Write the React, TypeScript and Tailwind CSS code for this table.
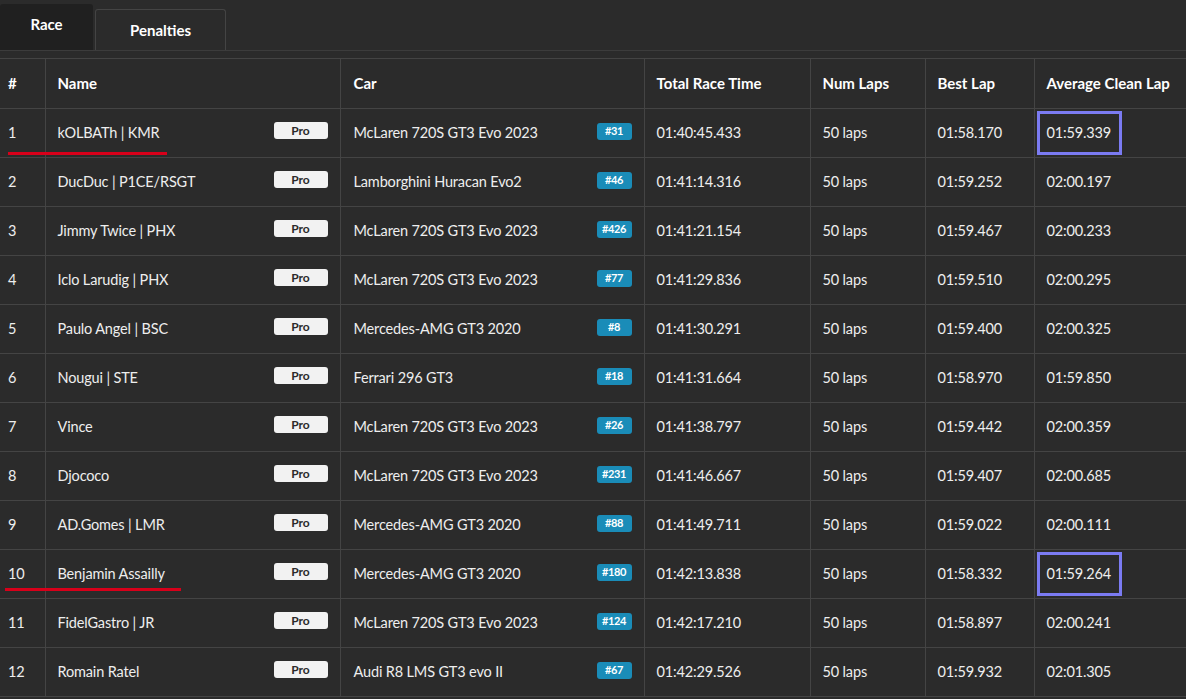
const rows = [
  { pos: 1, name: "kOLBATh | KMR", car: "McLaren 720S GT3 Evo 2023", num: "#31", total: "01:40:45.433", best: "01:58.170", avg: "01:59.339", mark: true, line: "w-[159px] left-[8px] bottom-[2px]" },
  { pos: 2, name: "DucDuc | P1CE/RSGT", car: "Lamborghini Huracan Evo2", num: "#46", total: "01:41:14.316", best: "01:59.252", avg: "02:00.197" },
  { pos: 3, name: "Jimmy Twice | PHX", car: "McLaren 720S GT3 Evo 2023", num: "#426", total: "01:41:21.154", best: "01:59.467", avg: "02:00.233" },
  { pos: 4, name: "Iclo Larudig | PHX", car: "McLaren 720S GT3 Evo 2023", num: "#77", total: "01:41:29.836", best: "01:59.510", avg: "02:00.295" },
  { pos: 5, name: "Paulo Angel | BSC", car: "Mercedes-AMG GT3 2020", num: "#8", total: "01:41:30.291", best: "01:59.400", avg: "02:00.325" },
  { pos: 6, name: "Nougui | STE", car: "Ferrari 296 GT3", num: "#18", total: "01:41:31.664", best: "01:58.970", avg: "01:59.850" },
  { pos: 7, name: "Vince", car: "McLaren 720S GT3 Evo 2023", num: "#26", total: "01:41:38.797", best: "01:59.442", avg: "02:00.359" },
  { pos: 8, name: "Djococo", car: "McLaren 720S GT3 Evo 2023", num: "#231", total: "01:41:46.667", best: "01:59.407", avg: "02:00.685" },
  { pos: 9, name: "AD.Gomes | LMR", car: "Mercedes-AMG GT3 2020", num: "#88", total: "01:41:49.711", best: "01:59.022", avg: "02:00.111" },
  { pos: 10, name: "Benjamin Assailly", car: "Mercedes-AMG GT3 2020", num: "#180", total: "01:42:13.838", best: "01:58.332", avg: "01:59.264", mark: true, line: "w-[176px] left-[5px] bottom-[7px]" },
  { pos: 11, name: "FidelGastro | JR", car: "McLaren 720S GT3 Evo 2023", num: "#124", total: "01:42:17.210", best: "01:58.897", avg: "02:00.241" },
  { pos: 12, name: "Romain Ratel", car: "Audi R8 LMS GT3 evo II", num: "#67", total: "01:42:29.526", best: "01:59.932", avg: "02:01.305" },
];

const App = () => {
  return (
    <div className="w-[1186px] h-[699px] overflow-hidden bg-[#2b2b2b] text-[#eeeeee] font-['Lato','Noto_Sans',sans-serif]">
      <div className="flex items-end h-[51px] border-b border-[#3c3c3c]">
        <div className="w-[93px] h-[46px] bg-[#202020] rounded-t-[3px] flex items-center justify-center pb-[6px] text-[15px] font-bold text-white">
          Race
        </div>
        <div className="ml-[2px] w-[131px] h-[41px] border border-b-0 border-[#444] rounded-t-[3px] flex items-center justify-center text-[15px] font-bold text-white">
          Penalties
        </div>
      </div>
      <table className="mt-[7px] table-fixed border-collapse w-[1187px] text-[14.5px] tracking-[-0.15px]">
        <colgroup>
          <col className="w-[45px]" />
          <col className="w-[295px]" />
          <col className="w-[304px]" />
          <col className="w-[166px]" />
          <col className="w-[115px]" />
          <col className="w-[109px]" />
          <col className="w-[153px]" />
        </colgroup>
        <thead>
          <tr className="h-[50px] text-white font-bold text-left text-[15px] tracking-normal">
            <th className="border border-[#444] border-l-0 pl-[8px]">#</th>
            <th className="border border-[#444] pl-[12px]">Name</th>
            <th className="border border-[#444] pl-[13px]">Car</th>
            <th className="border border-[#444] pl-[12px]">Total Race Time</th>
            <th className="border border-[#444] pl-[12px]">Num Laps</th>
            <th className="border border-[#444] pl-[12px]">Best Lap</th>
            <th className="border border-[#444] pl-[12px] whitespace-nowrap">Average Clean Lap</th>
          </tr>
        </thead>
        <tbody>
          {rows.map((r) => (
            <tr key={r.pos} className="h-[49px]">
              <td className="relative border border-[#444] border-l-0 pl-[8px]">
                {r.pos}
                {r.line && <div className={`absolute h-[3px] bg-[#d8001a] ${r.line}`} />}
              </td>
              <td className="border border-[#444] pl-[12px] pr-[12px]">
                <div className="flex items-center justify-between">
                  <span>{r.name}</span>
                  <span className="-mt-[5px] w-[54px] h-[17px] rounded-[3px] bg-[#f2f2f2] text-[#2b2b2b] text-[12px] font-bold tracking-normal flex items-center justify-center">
                    Pro
                  </span>
                </div>
              </td>
              <td className="border border-[#444] pl-[13px] pr-[12px]">
                <div className="flex items-center justify-between">
                  <span>{r.car}</span>
                  <span className="-mt-[4px] w-[35px] h-[17px] rounded-[3px] bg-[#1a8cb8] text-white text-[11px] font-bold tracking-[-0.4px] flex items-center justify-center">
                    {r.num}
                  </span>
                </div>
              </td>
              <td className="border border-[#444] pl-[12px]">{r.total}</td>
              <td className="border border-[#444] pl-[12px]">50 laps</td>
              <td className="border border-[#444] pl-[12px]">{r.best}</td>
              <td className="border border-[#444] pl-[12px]">
                {r.mark ? (
                  <span className="inline-flex items-center -ml-[10px] h-[44px] pl-[7px] pr-[8px] border-[3px] border-[#7b7bf2]">
                    {r.avg}
                  </span>
                ) : (
                  r.avg
                )}
              </td>
            </tr>
          ))}
        </tbody>
      </table>
    </div>
  );
};

export default App;
